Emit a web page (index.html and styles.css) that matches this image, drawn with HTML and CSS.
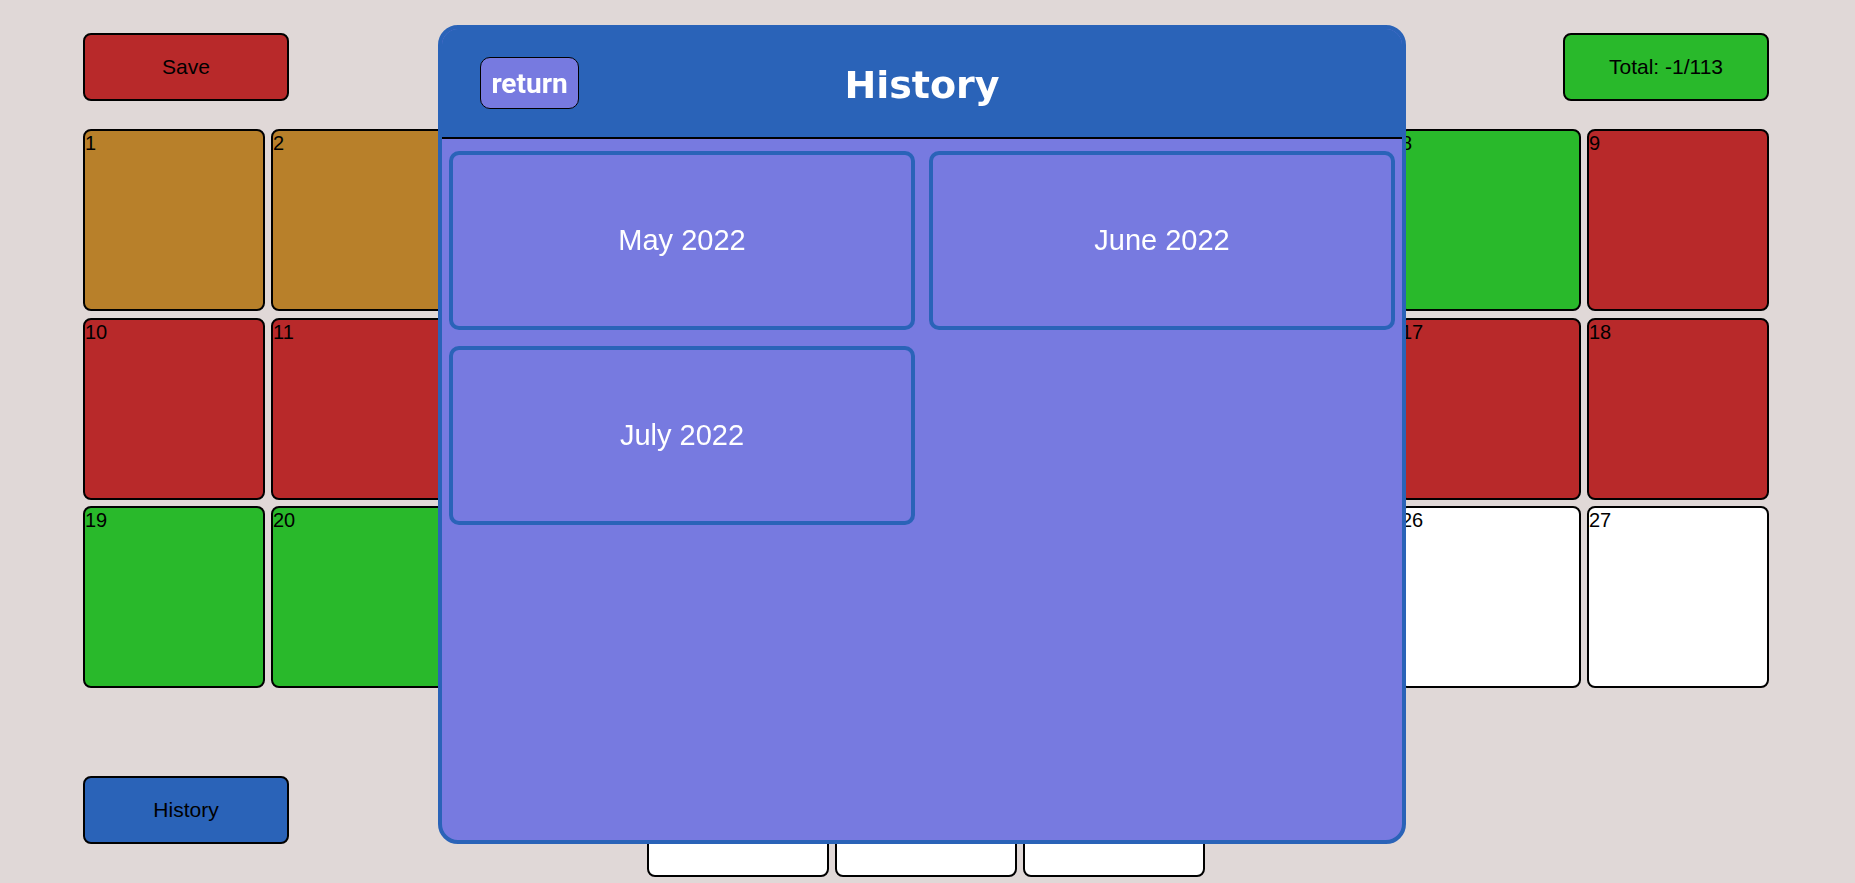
FILE: index.html
```html
<!DOCTYPE html>
<html lang="en">
<head>
<meta charset="utf-8">
<title>Calendar</title>
<link rel="stylesheet" href="styles.css">
</head>
<body>
<div class="page">
  <div class="topbar">
    <div class="btn btn-save">Save</div>
    <div class="btn btn-total">Total: -1/113</div>
  </div>
  <div class="grid">
    <div class="day gold">1</div>
    <div class="day gold">2</div>
    <div class="day green">3</div>
    <div class="day red">4</div>
    <div class="day gold">5</div>
    <div class="day green">6</div>
    <div class="day red">7</div>
    <div class="day green">8</div>
    <div class="day red">9</div>
    <div class="day red">10</div>
    <div class="day red">11</div>
    <div class="day green">12</div>
    <div class="day gold">13</div>
    <div class="day red">14</div>
    <div class="day green">15</div>
    <div class="day green">16</div>
    <div class="day red">17</div>
    <div class="day red">18</div>
    <div class="day green">19</div>
    <div class="day green">20</div>
    <div class="day red">21</div>
    <div class="day green">22</div>
    <div class="day green">23</div>
    <div class="day red">24</div>
    <div class="day white">25</div>
    <div class="day white">26</div>
    <div class="day white">27</div>
    <div class="day white">28</div>
    <div class="day white">29</div>
    <div class="day white">30</div>
  </div>
</div>
<div class="btn btn-history">History</div>
<div class="modal">
  <div class="modal-header">
    <button class="return">return</button>
    <h1 class="title">History</h1>
    <div class="spacer"></div>
  </div>
  <div class="modal-body">
    <div class="month">May 2022</div>
    <div class="month">June 2022</div>
    <div class="month">July 2022</div>
  </div>
</div>
</body>
</html>
```
FILE: styles.css
```css
html, body {
  margin: 0;
  padding: 0;
}
body {
  background: #e0d8d7;
  font-family: "Liberation Sans", Arial, sans-serif;
  color: #000;
  width: 1855px;
  height: 883px;
  overflow: hidden;
}
.page {
  padding: 33px 0 0 83px;
  width: 1686px;
}
.topbar {
  display: flex;
  justify-content: space-between;
  margin-bottom: 28px;
}
.btn {
  width: 206px;
  height: 68px;
  box-sizing: border-box;
  border: 2px solid #000;
  border-radius: 8px;
  display: flex;
  align-items: center;
  justify-content: center;
  font-size: 21px;
}
.btn-save { background: #b8292a; }
.btn-total { background: #29b92b; }
.btn-history {
  position: fixed;
  left: 83px;
  bottom: 39px;
  background: #2a63b8;
}
.grid {
  display: flex;
  flex-wrap: wrap;
  justify-content: center;
  column-gap: 6px;
  row-gap: 6.5px;
}
.day {
  width: 182px;
  height: 182px;
  box-sizing: border-box;
  border: 2px solid #000;
  border-radius: 8px;
  font-size: 20px;
  line-height: 23px;
  padding-top: 1px;
}
.gold { background: #b8802a; }
.red { background: #b8292a; }
.green { background: #29b92b; }
.white { background: #ffffff; }

.modal {
  position: fixed;
  left: 438px;
  top: 25px;
  width: 968px;
  height: 819px;
  box-sizing: border-box;
  border: 4px solid #2a63b8;
  border-radius: 20px;
  background: #777ae0;
  overflow: hidden;
}
.modal-header {
  height: 110px;
  box-sizing: border-box;
  border-bottom: 2px solid #000;
  background: #2a63b8;
  display: grid;
  grid-template-columns: 1fr auto 1fr;
  align-items: center;
}
.return {
  justify-self: start;
  margin-left: 38px;
  width: 99px;
  height: 52px;
  box-sizing: border-box;
  border: 1px solid #000;
  border-radius: 10px;
  background: #777ae0;
  color: #fff;
  font-family: Roboto, "Liberation Sans", sans-serif;
  font-weight: bold;
  font-size: 28px;
  padding: 0;
}
.title {
  margin: 4px 0 0 0;
  font-family: "DejaVu Sans", sans-serif;
  font-weight: bold;
  font-size: 38px;
  color: #fff;
}
.modal-body {
  display: grid;
  grid-template-columns: 466px 466px;
  column-gap: 14px;
  row-gap: 16px;
  padding: 12px 7px 0 7px;
}
.month {
  height: 179px;
  box-sizing: border-box;
  border: 4px solid #2a63b8;
  border-radius: 10px;
  display: flex;
  align-items: center;
  justify-content: center;
  color: #fff;
  font-size: 29px;
}
```
